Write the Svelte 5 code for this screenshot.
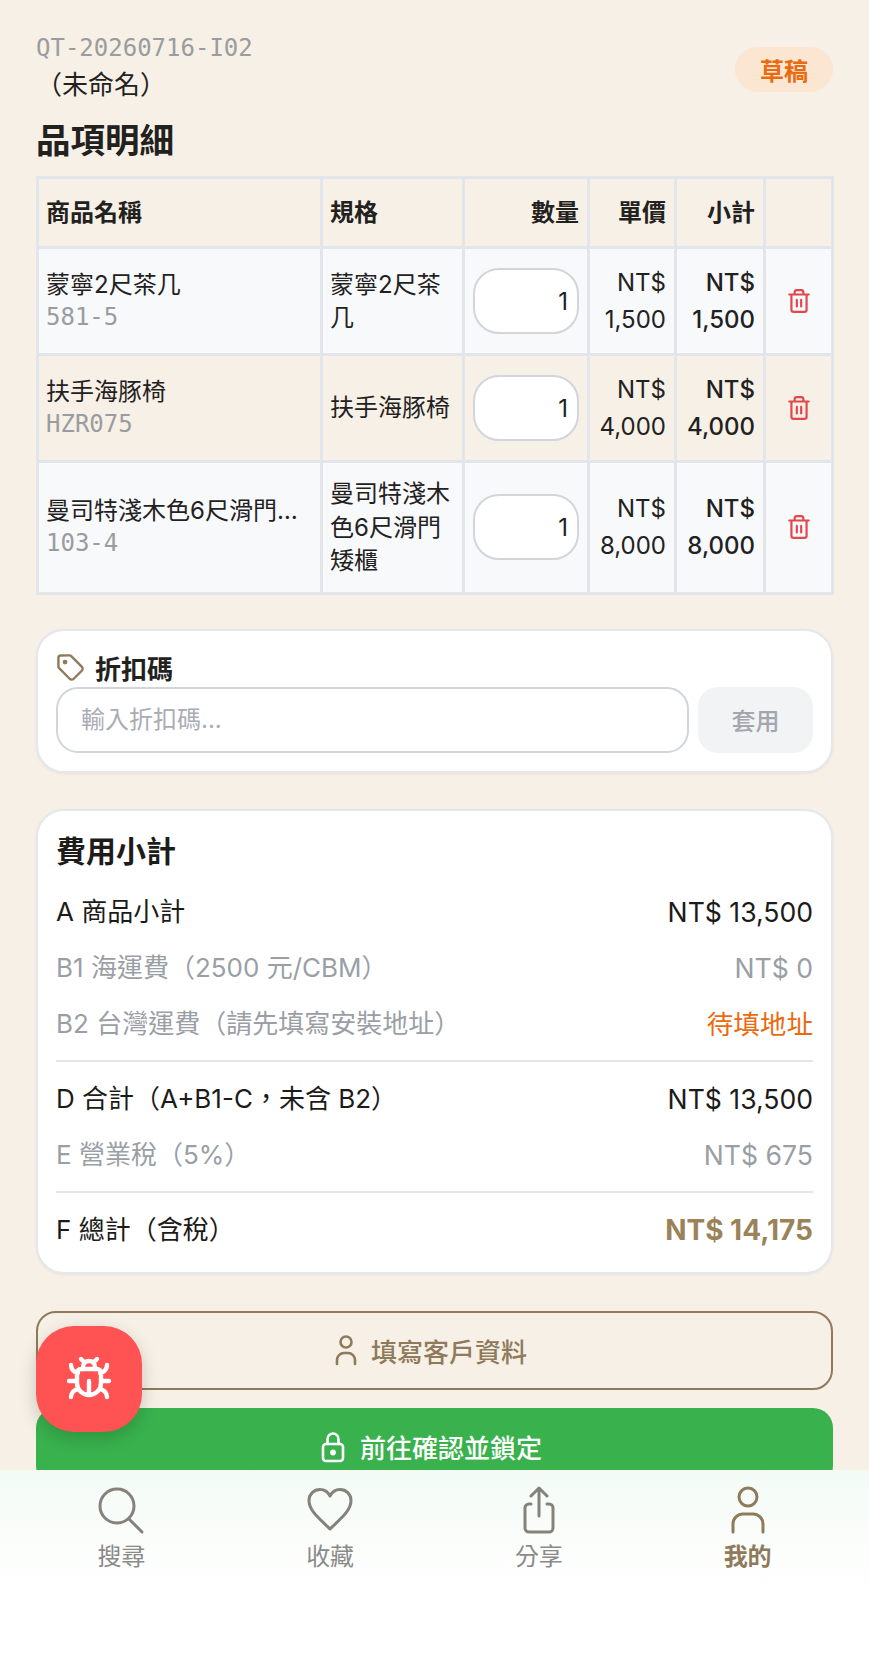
<script>
  const items = [
    { name: '蒙寧2尺茶几', code: '581-5', spec: '蒙寧2尺茶几', price: '1,500', tone: 'cool' },
    { name: '扶手海豚椅', code: 'HZR075', spec: '扶手海豚椅', price: '4,000', tone: 'warm' },
    { name: '曼司特淺木色6尺滑門矮櫃', code: '103-4', spec: '曼司特淺木色6尺滑門矮櫃', price: '8,000', tone: 'cool' }
  ];
  const costs = [
    { label: 'A 商品小計', value: 'NT$ 13,500', kind: 'main' },
    { label: 'B1 海運費（2500 元/CBM）', value: 'NT$ 0', kind: 'muted' },
    { label: 'B2 台灣運費（請先填寫安裝地址）', value: '待填地址', kind: 'muted', alert: true },
    { rule: true },
    { label: 'D 合計（A+B1-C，未含 B2）', value: 'NT$ 13,500', kind: 'main' },
    { label: 'E 營業稅（5%）', value: 'NT$ 675', kind: 'muted' },
    { rule: true },
    { label: 'F 總計（含稅）', value: 'NT$ 14,175', kind: 'main', total: true }
  ];
</script>

<div class="screen">
  <main class="page">
    <header class="head">
      <div class="quote">
        <div class="number">QT-20260716-I02</div>
        <div class="customer">（未命名）</div>
      </div>
      <span class="badge">草稿</span>
    </header>

    <h2 class="section">品項明細</h2>

    <table class="items">
      <colgroup>
        <col class="c-name" /><col class="c-spec" /><col class="c-qty" /><col class="c-price" /><col class="c-sub" /><col class="c-del" />
      </colgroup>
      <thead>
        <tr>
          <th>商品名稱</th>
          <th>規格</th>
          <th class="num">數量</th>
          <th class="num">單價</th>
          <th class="num">小計</th>
          <th></th>
        </tr>
      </thead>
      <tbody>
        {#each items as item}
          <tr class={item.tone}>
            <td>
              <div class="name">{item.name}</div>
              <div class="code">{item.code}</div>
            </td>
            <td>{item.spec}</td>
            <td class="qty"><input class="qty-input" value="1" /></td>
            <td class="num money">NT$ {item.price}</td>
            <td class="num money strong">NT$ {item.price}</td>
            <td class="del">
              <svg viewBox="0 0 24 24" width="26" height="26" fill="none" stroke="#e2474b" stroke-width="2" stroke-linecap="round" stroke-linejoin="round">
                <path d="M3 6h18M19 6v14a2 2 0 0 1-2 2H7a2 2 0 0 1-2-2V6M8 6V4a2 2 0 0 1 2-2h4a2 2 0 0 1 2 2v2M10 11v6M14 11v6" />
              </svg>
            </td>
          </tr>
        {/each}
      </tbody>
    </table>

    <section class="card discount">
      <div class="discount-title">
        <svg viewBox="0 0 24 24" width="29" height="29" fill="none" stroke="#8f7a5c" stroke-width="2" stroke-linecap="round" stroke-linejoin="round">
          <path d="M12.6 2.600A2 2 0 0 0 11.200 2H4a2 2 0 0 0-2 2v7.200a2 2 0 0 0 .6 1.400l8.700 8.700a2.400 2.400 0 0 0 3.400 0l6.600-6.600a2.400 2.400 0 0 0 0-3.400z" />
          <circle cx="7.500" cy="7.500" r="1" />
        </svg>
        <span>折扣碼</span>
      </div>
      <div class="discount-row">
        <input class="code-input" placeholder="輸入折扣碼..." />
        <button class="apply">套用</button>
      </div>
    </section>

    <section class="card summary">
      <h3>費用小計</h3>
      {#each costs as row}
        {#if row.rule}
          <hr />
        {:else}
          <div class="cost {row.kind}" class:total={row.total}>
            <span>{row.label}</span>
            <span class:alert={row.alert} class="amount">{row.value}</span>
          </div>
        {/if}
      {/each}
    </section>

    <button class="outline">
      <svg viewBox="0 0 24 32" width="24" height="32" fill="none" stroke="#8f7a5c" stroke-width="2.600" stroke-linecap="round">
        <circle cx="12" cy="8" r="5.500" />
        <path d="M3 30v-4a7 7 0 0 1 7-7h4a7 7 0 0 1 7 7v4" />
      </svg>
      填寫客戶資料
    </button>

    <button class="confirm">
      <svg viewBox="0 0 24 32" width="28" height="32" fill="none" stroke="#fff" stroke-width="2.600" stroke-linecap="round">
        <rect x="2" y="13" width="20" height="17" rx="3" />
        <path d="M6.500 13V8a5.500 5.500 0 0 1 11 0v5" />
        <circle cx="12" cy="21.500" r="1.600" fill="#fff" />
      </svg>
      前往確認並鎖定
    </button>
  </main>

  <button class="fab" aria-label="回報問題">
    <svg viewBox="0 0 24 24" width="48" height="48" fill="none" stroke="#fff" stroke-width="2.200" stroke-linecap="round" stroke-linejoin="round">
      <path d="M8 2l1.900 1.900M16 2l-1.900 1.900M9 7.100V6a3 3 0 1 1 6 0v1.100M6 9c0-1.100.9-2 2-2h8a2 2 0 0 1 2 2v5a6 6 0 0 1-12 0zM12 20v-7M6.500 9C4.600 8.800 3 7.100 3 5M6 13H2M3 21c0-2.100 1.700-3.900 3.800-4M21 5c0 2.100-1.600 3.800-3.500 4M22 13h-4M17.200 17c2.100.1 3.800 1.900 3.800 4" />
    </svg>
  </button>

  <nav class="tabs">
    <div class="tab">
      <svg viewBox="0 0 48 48" width="48" height="48" fill="none" stroke="#85817b" stroke-width="3" stroke-linecap="round">
        <circle cx="20" cy="20" r="17" />
        <path d="M32 33l13 13" />
      </svg>
      <span>搜尋</span>
    </div>
    <div class="tab">
      <svg viewBox="0 0 48 48" width="48" height="48" fill="none" stroke="#85817b" stroke-width="3" stroke-linejoin="round">
        <path d="M24 43C14 33 3 25 3 14.500 3 8 8 3.500 14 3.500c4.500 0 8 2.500 10 6.500 2-4 5.500-6.500 10-6.500 6 0 11 4.500 11 11C45 25 34 33 24 43z" />
      </svg>
      <span>收藏</span>
    </div>
    <div class="tab">
      <svg viewBox="0 0 48 48" width="48" height="48" fill="none" stroke="#85817b" stroke-width="3" stroke-linecap="round" stroke-linejoin="round">
        <path d="M16 18h-2a4 4 0 0 0-4 4v20a4 4 0 0 0 4 4h20a4 4 0 0 0 4-4V22a4 4 0 0 0-4-4h-2M24 30V2M16 10l8-8 8 8" />
      </svg>
      <span>分享</span>
    </div>
    <div class="tab active">
      <svg viewBox="0 0 48 48" width="48" height="48" fill="none" stroke="#8f7a5c" stroke-width="3" stroke-linecap="round">
        <circle cx="24" cy="11" r="9" />
        <path d="M9 46v-8a10 10 0 0 1 10-10h10a10 10 0 0 1 10 10v8" />
      </svg>
      <span>我的</span>
    </div>
  </nav>
</div>

<style>
  :global(body) {
    margin: 0;
    background: #f6f0e6;
  }

  .screen {
    position: relative;
    height: 1653px;
    overflow: hidden;
    background: #f6f0e6;
    color: #23211e;
    font-family: Inter, "Noto Sans CJK TC", sans-serif;
    font-size: 24px;
  }

  .page {
    padding: 33px 36px 0;
  }

  .head {
    display: flex;
    justify-content: space-between;
    align-items: center;
  }

  .number {
    font-family: "DejaVu Sans Mono", "Noto Sans CJK TC", monospace;
    font-size: 24px;
    line-height: 30px;
    color: #9a9c9e;
  }

  .customer {
    margin-top: 5px;
    font-size: 26px;
    line-height: 34px;
  }

  .badge {
    display: flex;
    align-items: center;
    justify-content: center;
    width: 98px;
    height: 45px;
    margin-top: 3px;
    border-radius: 23px;
    background: #fbe6d2;
    color: #ea6a10;
    font-weight: 700;
  }

  .section {
    margin: 15px 0 11px;
    font-size: 34.500px;
    line-height: 48px;
    font-weight: 700;
  }

  .items {
    width: 795px;
    table-layout: fixed;
    border-collapse: collapse;
    border: 3px solid #e2e6ea;
    line-height: 33.500px;
  }

  .c-name { width: 284px; }
  .c-spec { width: 142px; }
  .c-qty { width: 125px; }
  .c-price { width: 87px; }
  .c-sub { width: 89px; }
  .c-del { width: 68px; }

  th, td {
    border: 3px solid #e2e6ea;
    padding: 0 8px 0 7px;
    text-align: left;
    vertical-align: middle;
  }

  th {
    height: 67px;
    font-weight: 700;
  }

  .cool { background: #f7f9fb; }
  .warm { background: #f6f0e6; }

  tbody tr td {
    height: 107px;
    padding-top: 14px;
    padding-bottom: 14px;
    box-sizing: border-box;
  }

  .num { text-align: right; }
  .money { line-height: 37px; }
  .strong { font-weight: 500; }

  .name {
    white-space: nowrap;
    overflow: hidden;
    text-overflow: ellipsis;
  }

  .code {
    font-family: "DejaVu Sans Mono", monospace;
    font-size: 24px;
    color: #9a9c9e;
  }

  tbody .qty { padding: 0 8px; }

  .qty-input {
    box-sizing: border-box;
    display: block;
    width: 106px;
    height: 66px;
    padding: 0 9px;
    border: 2px solid #d2d5da;
    border-radius: 26px;
    background: #fff;
    color: #23211e;
    font: inherit;
    text-align: right;
  }

  tbody .del { text-align: center; padding: 0; }
  .del svg { display: block; margin: 0 auto; }

  .card {
    box-sizing: border-box;
    border: 2px solid #e5e7ea;
    border-radius: 28px;
    background: #fff;
    box-shadow: 0 1px 3px rgba(0, 0, 0, 0.06);
  }

  .discount {
    margin-top: 34px;
    height: 144px;
    padding: 18px 18px;
  }

  .discount-title {
    display: flex;
    align-items: center;
    gap: 10px;
    height: 38px;
    font-size: 26px;
    font-weight: 700;
  }

  .discount-row {
    display: flex;
    gap: 9px;
  }

  .code-input {
    box-sizing: border-box;
    flex: 1;
    min-width: 0;
    height: 66px;
    padding: 0 23px;
    border: 2px solid #d2d5da;
    border-radius: 22px;
    background: #fff;
    font: inherit;
  }

  .code-input::placeholder {
    color: #a9adb3;
  }

  .apply {
    width: 115px;
    height: 66px;
    border: none;
    border-radius: 20px;
    background: #f2f3f5;
    color: #a3a7ad;
    font: inherit;
    font-weight: 500;
  }

  .summary {
    margin-top: 36px;
    height: 465px;
    padding: 20px 18px;
  }

  .summary h3 {
    margin: 0 0 12px;
    font-size: 30px;
    line-height: 41px;
    font-weight: 700;
    color: #1d1c1a;
  }

  .cost {
    display: flex;
    justify-content: space-between;
    align-items: center;
    height: 56px;
    font-size: 26px;
    line-height: 34px;
  }

  .cost .amount { font-size: 26.600px; }
  .cost.main { color: #1c1b19; }
  .cost.muted { color: #9a9fa6; }
  .alert { color: #ea6a10; }
  .total .amount { color: #9a8259; font-size: 28px; font-weight: 700; }

  hr {
    margin: 8px 0 9px;
    border: none;
    border-top: 2px solid #e3e5e7;
  }

  .outline,
  .confirm {
    box-sizing: border-box;
    display: flex;
    align-items: center;
    justify-content: center;
    gap: 13px;
    width: 100%;
    padding: 0 8px 0 0;
    font: inherit;
    font-size: 26px;
    font-weight: 500;
  }

  .outline {
    margin-top: 37px;
    height: 79px;
    border: 2px solid #8f7a5c;
    border-radius: 20px;
    background: transparent;
    color: #8f7a5c;
  }

  .confirm {
    margin-top: 18px;
    height: 78px;
    border: none;
    border-radius: 20px;
    background: #39b24e;
    color: #fff;
  }

  .fab {
    position: absolute;
    left: 36px;
    top: 1326px;
    width: 106px;
    height: 106px;
    display: flex;
    align-items: center;
    justify-content: center;
    padding: 0;
    border: none;
    border-radius: 38px;
    background: #ff5252;
    box-shadow: 0 6px 18px rgba(0, 0, 0, 0.18);
  }

  .tabs {
    position: absolute;
    left: 0;
    right: 0;
    bottom: 0;
    height: 183px;
    box-sizing: border-box;
    padding: 16px 17px 0;
    display: grid;
    grid-template-columns: repeat(4, 1fr);
    align-items: start;
    background: linear-gradient(#f3fbf5, #fbfdfb 40%, #fff 70%);
  }

  .tab {
    display: flex;
    flex-direction: column;
    align-items: center;
    gap: 6px;
    color: #8a8a88;
    font-size: 24px;
    line-height: 34px;
  }

  .tab.active {
    color: #8f7a5c;
    font-weight: 700;
  }
</style>
